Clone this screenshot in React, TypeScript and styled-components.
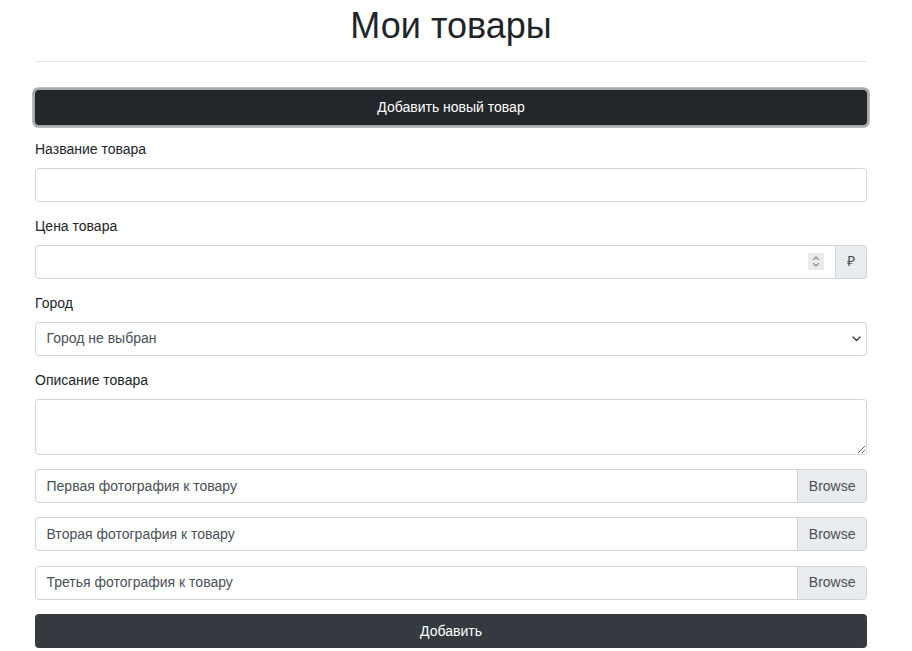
import React from "react";
import styled, { createGlobalStyle } from "styled-components";

const Global = createGlobalStyle`
  html { font-size: 14px; }
  body {
    margin: 0;
    font-family: "Liberation Sans", Arial, sans-serif;
    font-size: 1rem;
    line-height: 1.5;
    color: #212529;
    background: #fff;
  }
  *, *::before, *::after { box-sizing: border-box; }
`;

const Container = styled.div`
  width: 832px;
  margin-left: 35px;
`;

const Title = styled.h1`
  margin: 4px 0 0;
  font-size: 36px;
  font-weight: 500;
  line-height: 1.2;
  text-align: center;
`;

const Rule = styled.hr`
  margin: 14px 0 0;
  border: 0;
  border-top: 1px solid rgba(0, 0, 0, 0.1);
`;

const Button = styled.button<{ $focused?: boolean }>`
  display: block;
  width: 100%;
  height: 34px;
  padding: 0 0.75rem;
  font-family: inherit;
  font-size: 1rem;
  line-height: 1.5;
  color: #fff;
  border-radius: 0.25rem;
  border: 1px solid ${(p) => (p.$focused ? "#1d2124" : "#343a40")};
  background: ${(p) => (p.$focused ? "#23272b" : "#343a40")};
  box-shadow: ${(p) => (p.$focused ? "0 0 0 0.2rem rgba(82,88,93,0.5)" : "none")};
  text-align: center;
  cursor: pointer;
`;

const TopButton = styled(Button)`
  margin-top: 28px;
  height: 35px;
`;

const Form = styled.form`
  margin-top: 14px;
  display: flex;
  flex-direction: column;
`;

const Group = styled.div`
  margin-bottom: 14.5px;
`;

const Label = styled.label`
  display: inline-block;
  margin-bottom: 7.5px;
`;

const fieldCss = `
  display: block;
  width: 100%;
  padding: 0.375rem 0.75rem;
  font-family: inherit;
  font-size: 1rem;
  font-weight: 400;
  line-height: 1.5;
  color: #495057;
  background: #fff;
  border: 1px solid #ced4da;
  border-radius: 0.25rem;
`;

const Input = styled.input`
  ${fieldCss}
  height: 34px;
  &::-webkit-inner-spin-button,
  &::-webkit-outer-spin-button {
    -webkit-appearance: none;
    margin: 0;
  }
`;

const InputGroup = styled.div`
  position: relative;
  display: flex;
  align-items: stretch;
  width: 100%;
`;

const GroupInput = styled(Input)`
  flex: 1 1 auto;
  width: 1%;
  border-top-right-radius: 0;
  border-bottom-right-radius: 0;
`;

const Spinner = styled.span`
  position: absolute;
  right: 43px;
  top: 8px;
  width: 16px;
  height: 17px;
  background: #e9e9ed;
  border-radius: 1px;
  display: flex;
  align-items: center;
  justify-content: center;
`;

const Addon = styled.span`
  display: flex;
  align-items: center;
  justify-content: center;
  width: 32px;
  margin-left: -1px;
  color: #495057;
  background: #e9ecef;
  border: 1px solid #ced4da;
  border-radius: 0 0.25rem 0.25rem 0;
`;

const SelectWrap = styled.div`
  position: relative;
`;

const Select = styled.select`
  ${fieldCss}
  height: 34px;
  appearance: none;
  -webkit-appearance: none;
  padding-left: 0.75rem;
`;

const Chevron = styled.svg`
  position: absolute;
  right: 6px;
  top: 14px;
  pointer-events: none;
`;

const TextArea = styled.textarea`
  ${fieldCss}
  height: 56px;
  overflow: auto;
  resize: vertical;
`;

const FileBox = styled.div`
  display: flex;
  height: 34px;
  margin-bottom: 14.3px;
  border: 1px solid #ced4da;
  border-radius: 0.25rem;
  overflow: hidden;
  color: #495057;
`;

const FileText = styled.span`
  flex: 1;
  padding: 5.5px 0.75rem;
  line-height: 21px;
  white-space: nowrap;
`;

const Browse = styled.span`
  padding: 5.5px 0.75rem;
  line-height: 21px;
  background: #e9ecef;
  border-left: 1px solid #ced4da;
`;

const FileField = ({ text }: { text: string }) => (
  <FileBox>
    <FileText>{text}</FileText>
    <Browse>Browse</Browse>
  </FileBox>
);

export default function App() {
  return (
    <>
      <Global />
      <Container>
        <Title>Мои товары</Title>
        <Rule />
        <TopButton type="button" $focused>
          Добавить новый товар
        </TopButton>
        <Form onSubmit={(e) => e.preventDefault()}>
          <Group>
            <Label>Название товара</Label>
            <Input type="text" />
          </Group>
          <Group>
            <Label>Цена товара</Label>
            <InputGroup>
              <GroupInput type="number" />
              <Spinner>
                <svg width="8" height="13" viewBox="0 0 8 13" fill="none" stroke="#8a8a8e" strokeWidth="1.1" strokeLinecap="round" strokeLinejoin="round">
                  <path d="M1.5 4.5 L4 2 L6.5 4.5" />
                  <path d="M1.5 8.5 L4 11 L6.5 8.5" />
                </svg>
              </Spinner>
              <Addon>₽</Addon>
            </InputGroup>
          </Group>
          <Group>
            <Label>Город</Label>
            <SelectWrap>
              <Select defaultValue="">
                <option value="">Город не выбран</option>
              </Select>
              <Chevron width="9" height="6" viewBox="0 0 9 6" fill="none" stroke="#343a40" strokeWidth="1.4" strokeLinecap="round" strokeLinejoin="round">
                <path d="M1 1 L4.5 4.5 L8 1" />
              </Chevron>
            </SelectWrap>
          </Group>
          <Group>
            <Label>Описание товара</Label>
            <TextArea rows={2} />
          </Group>
          <FileField text="Первая фотография к товару" />
          <FileField text="Вторая фотография к товару" />
          <FileField text="Третья фотография к товару" />
          <Button type="submit">Добавить</Button>
        </Form>
      </Container>
    </>
  );
}
